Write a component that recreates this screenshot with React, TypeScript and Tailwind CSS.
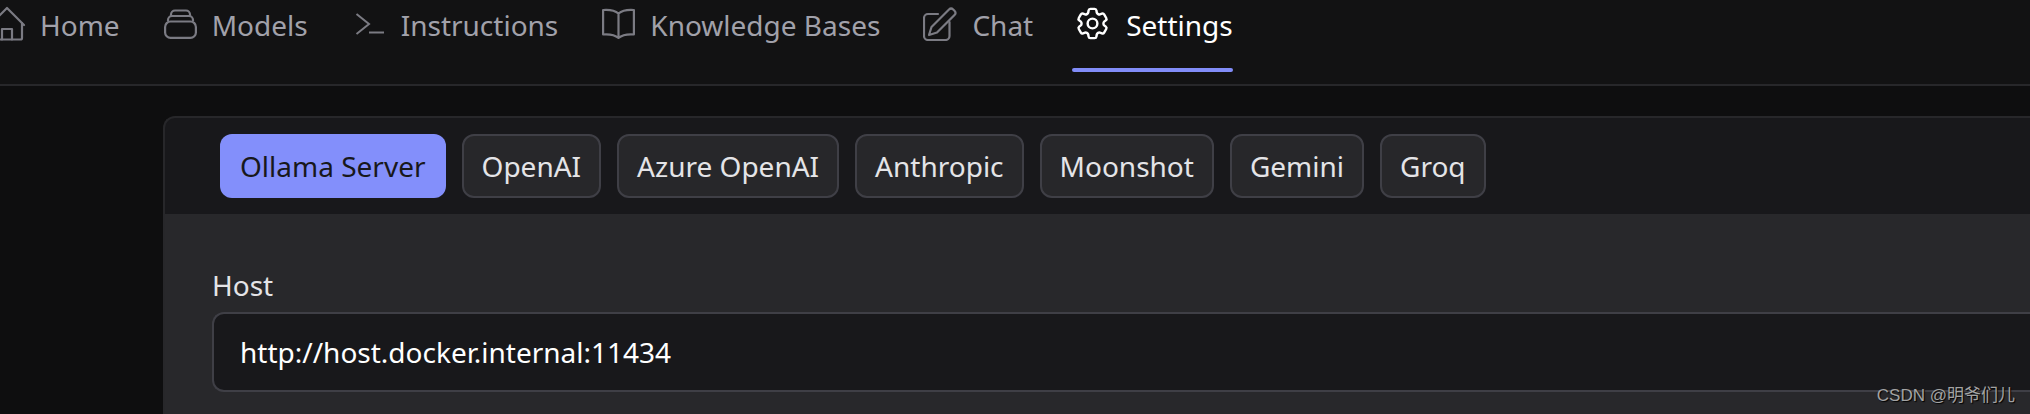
import type { ReactNode } from "react";
import { HiOutlineCog6Tooth } from "react-icons/hi2";

function HomeIcon() {
  return (
    <svg viewBox="-11 6 38 36" fill="none" stroke="currentColor" strokeWidth="2.2" strokeLinecap="round" strokeLinejoin="round" className="-ml-[11px] -mr-[2px] h-9 w-[38px]">
      <path d="M-10 25 7 8l17 17" />
      <path d="M22 23v15a1.500 1.500 0 0 1-1.500 1.500H-4" />
      <path d="M2 39.500V29h10v10.500" />
    </svg>
  );
}

function ModelsIcon() {
  return (
    <svg viewBox="0 0 33 30" fill="none" stroke="currentColor" strokeWidth="2.2" className="h-[30px] w-[33px]">
      <rect x="1.100" y="12.500" width="30.800" height="16.400" rx="5.500" />
      <path d="M4 12.500V11a4 4 0 0 1 4-4h17a4 4 0 0 1 4 4v1.500" />
      <path d="M7 7V5.500a4 4 0 0 1 4-4h11a4 4 0 0 1 4 4V7" />
    </svg>
  );
}

function TerminalIcon() {
  return (
    <svg viewBox="0 0 32 22" fill="none" stroke="currentColor" strokeWidth="2" className="h-[22px] w-8">
      <path d="M4.500 1 17 11 4.500 21" />
      <path d="M17 19.500h15" />
    </svg>
  );
}

function BookIcon() {
  return (
    <svg viewBox="0 0 33 31" fill="none" stroke="currentColor" strokeWidth="2.2" strokeLinejoin="round" className="h-[31px] w-[33px]">
      <path d="M16.500 5.500C13 2.500 8 1.500 1.100 2v24.500c7-.5 11.900 .5 15.400 3.500 3.500-3 8.400-4 15.400-3.500V2c-6.900-.5-11.900 .5-15.400 3.500Zm0 0V30" />
    </svg>
  );
}

function PencilIcon() {
  return (
    <svg viewBox="0 0 34 34" fill="none" stroke="currentColor" strokeWidth="2.2" strokeLinejoin="round" strokeLinecap="round" className="h-[34px] w-[34px]">
      <path d="M15 7H5a4 4 0 0 0-4 4v18a4 4 0 0 0 4 4h17.500a4 4 0 0 0 4-4V15" />
      <path d="m6 28 2.500-8L26 2.500a3 3 0 0 1 4.200 0l1.300 1.300a3 3 0 0 1 0 4.200L14 25.500 6 28Z" />
    </svg>
  );
}

const navItems: { label: string; icon: ReactNode; gap: string; margin: string }[] = [
  { label: "Home", icon: <HomeIcon />, gap: "gap-[15px]", margin: "mr-0" },
  { label: "Models", icon: <ModelsIcon />, gap: "gap-[15px]", margin: "mr-0" },
  { label: "Instructions", icon: <TerminalIcon />, gap: "gap-[17px]", margin: "mr-0" },
  { label: "Knowledge Bases", icon: <BookIcon />, gap: "gap-[15px]", margin: "-mr-px" },
  { label: "Chat", icon: <PencilIcon />, gap: "gap-[15px]", margin: "mr-0" },
];

const tabs = ["OpenAI", "Azure OpenAI", "Anthropic", "Moonshot", "Gemini", "Groq"];

export default function App() {
  return (
    <div className="relative flex h-[414px] w-[2030px] flex-col overflow-hidden bg-[#0e0e0f] font-['Noto_Sans',sans-serif] text-[28px]">
      {/* top nav */}
      <nav className="flex h-[86px] shrink-0 items-start gap-11 border-b-2 border-[#27272a] bg-[#121213] text-[#a1a1aa]">
        {navItems.map((item) => (
          <a key={item.label} className={`flex h-[50px] items-center ${item.gap} ${item.margin} leading-none`}>
            <span className="mb-[3px] flex text-[#7b7b83]">{item.icon}</span>
            <span>{item.label}</span>
          </a>
        ))}
        <a className="-ml-[5px] flex flex-col text-white">
          <span className="flex h-[50px] items-center gap-4 pl-[3px] leading-none">
            <HiOutlineCog6Tooth className="mb-[3px] h-[39px] w-[39px] -mx-[2px]" />
            <span>Settings</span>
          </span>
          <span className="mt-[18px] h-1 rounded-full bg-[#818cf8]" />
        </a>
      </nav>

      {/* provider panel */}
      <section className="ml-[163px] mt-[30px] flex-1 overflow-hidden rounded-tl-xl border-l-2 border-t-2 border-[#27272a] bg-[#28282b]">
        <div className="flex h-[96px] items-start gap-4 bg-[#18181b] pl-[55px] pt-4">
          <button className="h-16 rounded-xl bg-[#838ffb] px-5 text-[#18181b]">Ollama Server</button>
          {tabs.map((tab) => (
            <button key={tab} className="h-16 rounded-xl border-2 border-[#3f3f46] bg-[#27272a] px-[18px] text-[#e4e4e7]">
              {tab}
            </button>
          ))}
        </div>
        <div className="pl-[47px] pt-[52px]">
          <label className="mb-2 block leading-[38px] text-[#e4e4e7]">Host</label>
          <div className="flex h-20 items-center rounded-l-xl border-y-2 border-l-2 border-[#3f3f46] bg-[#18181b] pl-[26px] text-white">
            http://host.docker.internal:11434
          </div>
        </div>
      </section>

      <span className="absolute bottom-[8px] right-[15px] font-['Liberation_Sans','Noto_Sans_CJK_SC',sans-serif] text-[17px] leading-5 text-[#a3a3a3] [text-shadow:1px_1px_1px_#000]">
        CSDN @明爷们儿
      </span>
    </div>
  );
}
